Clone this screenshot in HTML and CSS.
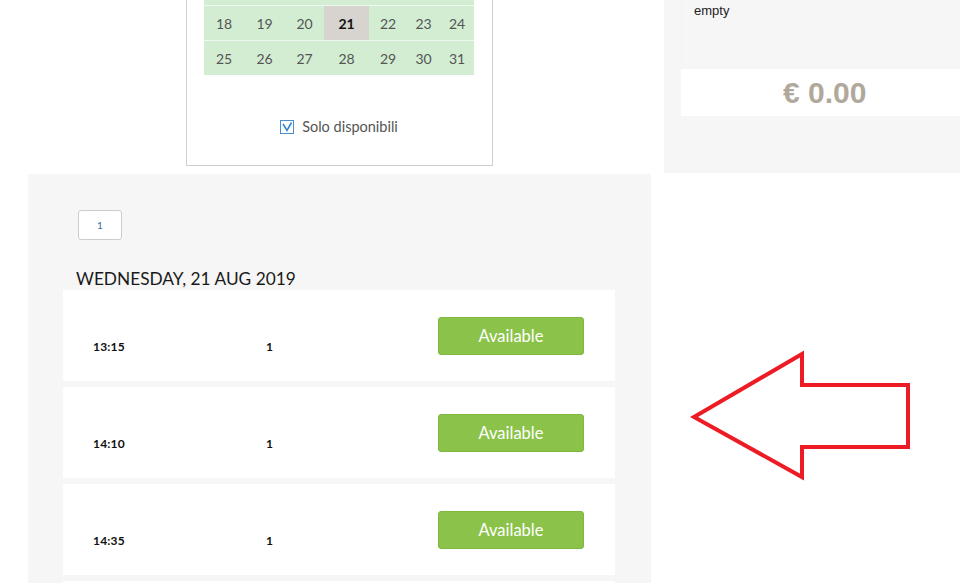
FILE: index.html
```html
<!DOCTYPE html>
<html>
<head>
<meta charset="utf-8">
<link rel="stylesheet" href="styles.css">
</head>
<body>
<div class="page">
  <div class="top">
    <div class="cal-area">
      <div class="cal-box">
        <div class="cal-grid">
          <div class="day strip"></div><div class="day strip"></div><div class="day strip"></div><div class="day strip"></div><div class="day strip"></div><div class="day strip"></div><div class="day strip"></div>
          <div class="day">18</div><div class="day">19</div><div class="day">20</div><div class="day sel">21</div><div class="day">22</div><div class="day">23</div><div class="day">24</div>
          <div class="day">25</div><div class="day">26</div><div class="day">27</div><div class="day">28</div><div class="day">29</div><div class="day">30</div><div class="day">31</div>
        </div>
        <label class="only">
          <svg class="chk" width="14" height="14" viewBox="0 0 14 14"><rect x="0.5" y="0.5" width="13" height="13" fill="#fff" stroke="#4a90d0"/><path d="M3 4 L7 10.5 L11.5 2.5" fill="none" stroke="#3a86cc" stroke-width="1.6"/></svg>
          <span>Solo disponibili</span>
        </label>
      </div>
    </div>
    <div class="cart">
      <div class="cart-empty">empty</div>
      <div class="cart-total">€ 0.00</div>
    </div>
  </div>
  <div class="slots">
    <div class="pager"><span class="pg">1</span></div>
    <h2 class="date">WEDNESDAY, 21 AUG 2019</h2>
    <div class="row"><span class="time">13:15</span><span class="qty">1</span><button class="btn">Available</button></div>
    <div class="row"><span class="time">14:10</span><span class="qty">1</span><button class="btn">Available</button></div>
    <div class="row"><span class="time">14:35</span><span class="qty">1</span><button class="btn">Available</button></div>
    <div class="row"></div>
  </div>
  <svg class="arrow" width="960" height="583" viewBox="0 0 960 583"><polygon points="694,417 802,354 802,385 908,385 908,447 802,447 802,477" fill="none" stroke="#ed1c24" stroke-width="4" stroke-linejoin="miter"/></svg>
</div>
</body>
</html>
```
FILE: styles.css
```css
html, body { margin: 0; padding: 0; background: #fff; }
body { width: 960px; height: 583px; overflow: hidden; font-family: Lato, "Open Sans", sans-serif; }
.page { position: relative; width: 960px; height: 583px; overflow: hidden; }
.top { display: flex; height: 174px; }
.cal-area { width: 664px; padding-left: 186px; box-sizing: border-box; }
.cal-box { width: 307px; box-sizing: border-box; border: 1px solid #cfcfcf; border-top: none; background: #fff; padding: 0 18px 0 17px; height: 166px; }
.cal-grid { display: grid; grid-template-columns: 40px 41px 39px 45px 38px 33px 34px; grid-template-rows: 5px 34px 34px; row-gap: 1px; background: #eef8ee; }
.day { background: #d3edd3; color: #555; font-size: 14px; display: flex; align-items: center; justify-content: center; }
.day.sel { background: #d7d3cf; color: #111; font-weight: 700; }
.only { display: flex; align-items: center; justify-content: center; gap: 8px; margin-top: 43px; color: #555; font-size: 14.5px; margin-left: 0; }
.chk { display: block; }
.cart { flex: 1; background: #f6f6f6; height: 173px; padding-left: 17px; }
.cart-empty { height: 69px; box-sizing: border-box; padding: 3px 0 0 12px; font-family: "Liberation Sans", Arial, sans-serif; font-size: 13px; color: #222; border-left: 1px dotted #efefef; }
.cart-total { background: #fff; height: 47px; padding-left: 102px; font-family: "Liberation Sans", Arial, sans-serif; font-weight: 700; font-size: 30px; color: #b1a89c; line-height: 47px; }
.slots { margin-left: 28px; width: 623px; background: #f6f6f6; height: 420px; padding: 36px 36px 0 35px; box-sizing: border-box; }
.pager { padding-left: 15px; }
.pg { display: inline-block; width: 44px; height: 30px; box-sizing: border-box; border: 1px solid #ccc; border-radius: 3px; background: #fff; color: #3a6c9c; font-size: 10px; text-align: center; line-height: 28px; }
.date { margin: 28px 0 0 13px; font-size: 17.3px; font-weight: 400; color: #1a1a1a; line-height: 22px; height: 22px; }
.row { background: #fff; height: 91px; margin-top: 6px; box-sizing: border-box; display: flex; align-items: flex-start; padding: 27px 31px 0 30px; }
.date + .row { margin-top: 0; }
.time { width: 173px; margin-top: 22px; font-size: 12px; font-weight: 700; color: #111; line-height: 16px; letter-spacing: 0.2px; }
.qty { width: 172px; margin-top: 22px; font-size: 12px; font-weight: 700; color: #111; line-height: 16px; }
.btn { width: 146px; height: 38px; background: #8bc34a; border: 1px solid #7fb83e; border-radius: 3px; color: #fff; font-family: Lato, "Open Sans", sans-serif; font-size: 16.5px; padding: 0; }
.arrow { position: absolute; left: 0; top: 0; pointer-events: none; }
```
